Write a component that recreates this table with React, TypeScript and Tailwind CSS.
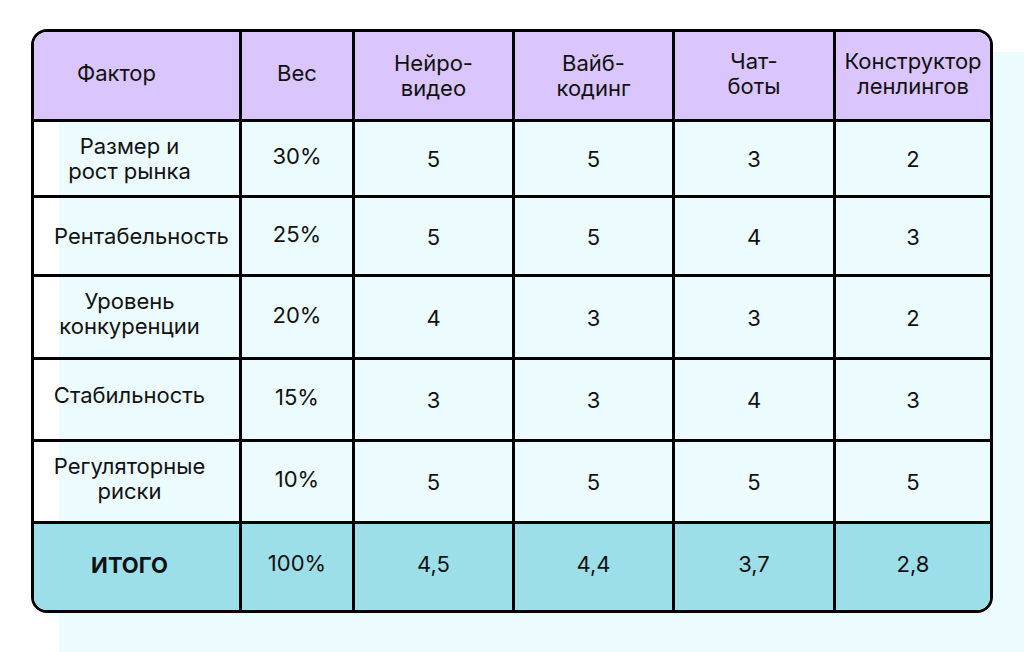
import React from "react";

type Cell = { text: React.ReactNode; cls?: string };

const header: Cell[] = [
  { text: "Фактор", cls: "pr-[40px] pb-[4px]" },
  { text: "Вес", cls: "pb-[4px]" },
  { text: <>Нейро-<br />видео</> },
  { text: <>Вайб-<br />кодинг</> },
  { text: <>Чат-<br />боты</>, cls: "pb-[4px]" },
  { text: <>Конструктор<br />ленлингов</>, cls: "pb-[4px]" },
];

const rows: { name: React.ReactNode; nameCls: string; w: string; vals: string[] }[] = [
  { name: <>Размер и<br />рост рынка</>, nameCls: "pr-[14px]", w: "30%", vals: ["5", "5", "3", "2"] },
  { name: "Рентабельность", nameCls: "pl-[10px]", w: "25%", vals: ["5", "5", "4", "3"] },
  { name: <>Уровень<br />конкуренции</>, nameCls: "pr-[14px] pb-[6px]", w: "20%", vals: ["4", "3", "3", "2"] },
  { name: "Стабильность", nameCls: "pr-[14px] pb-[8px]", w: "15%", vals: ["3", "3", "4", "3"] },
  { name: <>Регуляторные<br />риски</>, nameCls: "pr-[14px] pb-[6px]", w: "10%", vals: ["5", "5", "5", "5"] },
];

const footer = ["4,5", "4,4", "3,7", "2,8"];

export default function App() {
  const base =
    "flex items-center justify-center text-center text-[22px] leading-[25px] text-[#111111] border-black";
  return (
    <div
      className="relative w-[1024px] h-[652px] bg-white overflow-hidden pt-[29px] pl-[31px]"
      style={{ fontFamily: "Inter, 'Noto Sans', sans-serif" }}
    >
      <div className="absolute left-[59px] top-[52px] right-0 bottom-0 bg-[#ebfbfe]" />
      <div className="relative w-[962px] border-[3px] border-black rounded-[16px] overflow-hidden grid grid-cols-[208px_113px_160px_160px_161px_154px] grid-rows-[90px_76px_79px_83px_82px_82px_86px]">
        {header.map((c, i) => (
          <div
            key={"h" + i}
            className={`${base} bg-[#dac5fd] border-b-[3px] ${i < 5 ? "border-r-[3px]" : ""} ${c.cls ?? ""}`}
          >
            <span>{c.text}</span>
          </div>
        ))}
        {rows.map((r, ri) => (
          <React.Fragment key={"r" + ri}>
            <div className={`${base} border-b-[3px] border-r-[3px] ${r.nameCls}`}>
              <span>{r.name}</span>
            </div>
            <div className={`${base} border-b-[3px] border-r-[3px] pb-[4px]`}>
              <span>{r.w}</span>
            </div>
            {r.vals.map((v, vi) => (
              <div
                key={vi}
                className={`${base} border-b-[3px] ${vi < 3 ? "border-r-[3px]" : ""} pt-[2px]`}
              >
                <span>{v}</span>
              </div>
            ))}
          </React.Fragment>
        ))}
        <div className={`${base} bg-[#9ddfe9] border-r-[3px] pr-[14px] pb-[4px] font-bold`}>
          <span>ИТОГО</span>
        </div>
        <div className={`${base} bg-[#9ddfe9] border-r-[3px] pb-[8px]`}>
          <span>100%</span>
        </div>
        {footer.map((v, vi) => (
          <div
            key={"f" + vi}
            className={`${base} bg-[#9ddfe9] ${vi < 3 ? "border-r-[3px]" : ""} pb-[6px]`}
          >
            <span>{v}</span>
          </div>
        ))}
      </div>
    </div>
  );
}
